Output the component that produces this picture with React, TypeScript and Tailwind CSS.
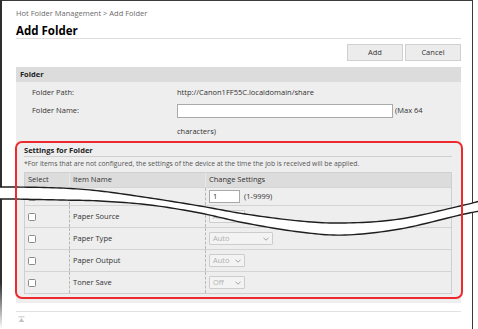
import React from "react";

function sample(pts: number[][]): number[][] {
  const out: number[][] = [];
  const n = pts.length;
  for (let i = 0; i < n - 1; i++) {
    const p0 = pts[Math.max(0, i - 1)];
    const p1 = pts[i];
    const p2 = pts[i + 1];
    const p3 = pts[Math.min(n - 1, i + 2)];
    for (let s = 0; s < 12; s++) {
      const t = s / 12;
      const t2 = t * t;
      const t3 = t2 * t;
      const f = (a: number, b: number, c: number, d: number) =>
        0.5 * (2 * b + (-a + c) * t + (2 * a - 5 * b + 4 * c - d) * t2 + (-a + 3 * b - 3 * c + d) * t3);
      out.push([f(p0[0], p1[0], p2[0], p3[0]), f(p0[1], p1[1], p2[1], p3[1])]);
    }
  }
  out.push(pts[n - 1]);
  return out;
}

const upperPts = [
  [-2, 187], [14, 187], [60, 188], [100, 191], [150, 198], [200, 206], [245, 214], [300, 221], [345, 223], [400, 219], [460, 206], [480, 201],
];
const lowerPts = [
  [-2, 199], [14, 199], [60, 200], [100, 201], [150, 205], [200, 213], [245, 223], [300, 232], [345, 235], [400, 229], [460, 215], [480, 211],
];

function Wave() {
  const up = sample(upperPts);
  const lo = sample(lowerPts);
  const poly = [...up, ...lo.slice().reverse()].map((p) => p.join(",")).join(" ");
  const line = (a: number[][]) => a.map((p) => p.join(",")).join(" ");
  return (
    <svg className="absolute left-0 top-0" width="478" height="329" viewBox="0 0 478 329">
      <polygon points={poly} fill="#ffffff" />
      <polyline points={line(up)} fill="none" stroke="#1e1e1e" strokeWidth="1.4" />
      <polyline points={line(lo)} fill="none" stroke="#1e1e1e" strokeWidth="1.4" />
    </svg>
  );
}

function Checkbox() {
  return <div className="w-[8px] h-[8px] bg-white border border-[#8a8a8a] rounded-[1.5px]" />;
}

function Chevron() {
  return (
    <svg width="6" height="4" viewBox="0 0 6 4" className="shrink-0">
      <path d="M0.5 0.8 L3 3.2 L5.5 0.8" fill="none" stroke="#9a9a9a" strokeWidth="0.9" />
    </svg>
  );
}

function Select({ value, w }: { value: string; w: string }) {
  return (
    <div
      className={`${w} h-[13px] flex items-center justify-between pl-[3px] pr-[3px] bg-[#f3f3f3] border border-[#cdcdcd] rounded-[1px] text-[#b0b0b0] text-[7.5px] leading-none`}
    >
      <span>{value}</span>
      <Chevron />
    </div>
  );
}

function Row({ name, children, h }: { name: string; children: React.ReactNode; h: string }) {
  return (
    <div className={`flex ${h} border-t border-[#d4d4d4]`}>
      <div className="w-[45px] border-r border-dashed border-[#b8b8b8] flex items-center pl-[3px]">
        <Checkbox />
      </div>
      <div className="w-[136px] border-r border-dashed border-[#b8b8b8] flex items-center pl-[3px]">{name}</div>
      <div className="flex-1 flex items-center pl-[3px]">{children}</div>
    </div>
  );
}

export default function App() {
  return (
    <div className="relative w-[478px] h-[329px] overflow-hidden bg-white font-['Open_Sans',sans-serif] text-[#333] text-[7.5px]">
      <div className="w-[473px] h-[345px] border-t border-r border-[#3a3a3a] pl-[16px] pr-[11px]">
        <div className="mt-[6px] h-[12px] leading-[12px] text-[7.5px] text-[#6a6a6a]">
          Hot Folder Management &gt; Add Folder
        </div>
        <div className="mt-[4px] h-[16px] leading-[15px] text-[11.5px] font-bold text-black border-b border-[#dedede]">
          Add Folder
        </div>
        <div className="mt-[5px] flex justify-end gap-[2px]">
          <div className="w-[56px] h-[17px] flex items-center justify-center bg-[#ececec] border border-[#d0d0d0] text-[#333]">
            Add
          </div>
          <div className="w-[56px] h-[17px] flex items-center justify-center bg-[#ececec] border border-[#d0d0d0] text-[#333]">
            Cancel
          </div>
        </div>

        <div className="mt-[6px] bg-[#eeeeee] pb-[9px]">
          <div className="h-[15px] bg-[#dcdcdc] pl-[4px] font-bold leading-[15px] text-[#222]">Folder</div>
          <div className="pl-[16px] pt-[4px]">
            <div className="flex h-[14px] items-center">
              <div className="w-[145px]">Folder Path:</div>
              <div>http://Canon1FF55C.localdomain/share</div>
            </div>
            <div className="mt-[4px] flex h-[14px] items-center">
              <div className="w-[145px]">Folder Name:</div>
              <div className="w-[216px] h-[14px] bg-white border border-[#a9a9a9]" />
              <div className="ml-[2px]">(Max 64</div>
            </div>
            <div className="mt-[7px] ml-[145px] h-[12px] leading-[12px]">characters)</div>
          </div>

          <div className="ml-[8px] mr-[9px]">
            <div className="mt-[8px] h-[12px] leading-[11px] font-bold text-[#222] border-b border-[#cfcfcf]">
              Settings for Folder
            </div>
            <div className="mt-[2px] h-[10px] leading-[10px] text-[6.8px] text-[#555] whitespace-nowrap">
              *For items that are not configured, the settings of the device at the time the job is received will be
              applied.
            </div>
            <div className="mt-[3px] border-l border-r border-b border-[#cfcfcf]">
              <div className="flex h-[15px] bg-[#dcdcdc] border-t border-[#cfcfcf]">
                <div className="w-[45px] border-r border-[#e8e8e8] flex items-center pl-[3px]">Select</div>
                <div className="w-[136px] border-r border-[#e8e8e8] flex items-center pl-[3px]">Item Name</div>
                <div className="flex-1 flex items-center pl-[3px]">Change Settings</div>
              </div>
              <Row name="Number of Copies" h="h-[18px]">
                <div className="w-[31px] h-[13px] bg-white border border-[#a9a9a9] flex items-center pl-[3px] text-[#333]">
                  1
                </div>
                <span className="ml-[4px]">(1-9999)</span>
              </Row>
              <Row name="Paper Source" h="h-[22px]">
                <Select value="Auto" w="w-[36px]" />
              </Row>
              <Row name="Paper Type" h="h-[22px]">
                <Select value="Auto" w="w-[64px]" />
              </Row>
              <Row name="Paper Output" h="h-[22px]">
                <Select value="Auto" w="w-[36px]" />
              </Row>
              <Row name="Toner Save" h="h-[22px]">
                <Select value="Off" w="w-[36px]" />
              </Row>
            </div>
          </div>
        </div>

        <div className="mt-[8px] border-t border-[#e2e2e2] pt-[4px] pl-[2px]">
          <svg width="7" height="7" viewBox="0 0 7 7">
            <line x1="0.5" y1="0.8" x2="6.5" y2="0.8" stroke="#b5b5b5" strokeWidth="0.8" />
            <path d="M3.5 2 L6.3 6 L0.7 6 Z" fill="#c4c4c4" />
          </svg>
        </div>
      </div>

      <div className="absolute left-0 top-0 w-[2px] h-[329px] bg-[linear-gradient(to_bottom,#2e2e2e_0%,#2e2e2e_86%,#ffffff_100%)]" />

      <Wave />

      <div className="absolute left-[15px] top-[141px] w-[448px] h-[158px] border-2 border-[#ef2a2e] rounded-[7px]" />
    </div>
  );
}
